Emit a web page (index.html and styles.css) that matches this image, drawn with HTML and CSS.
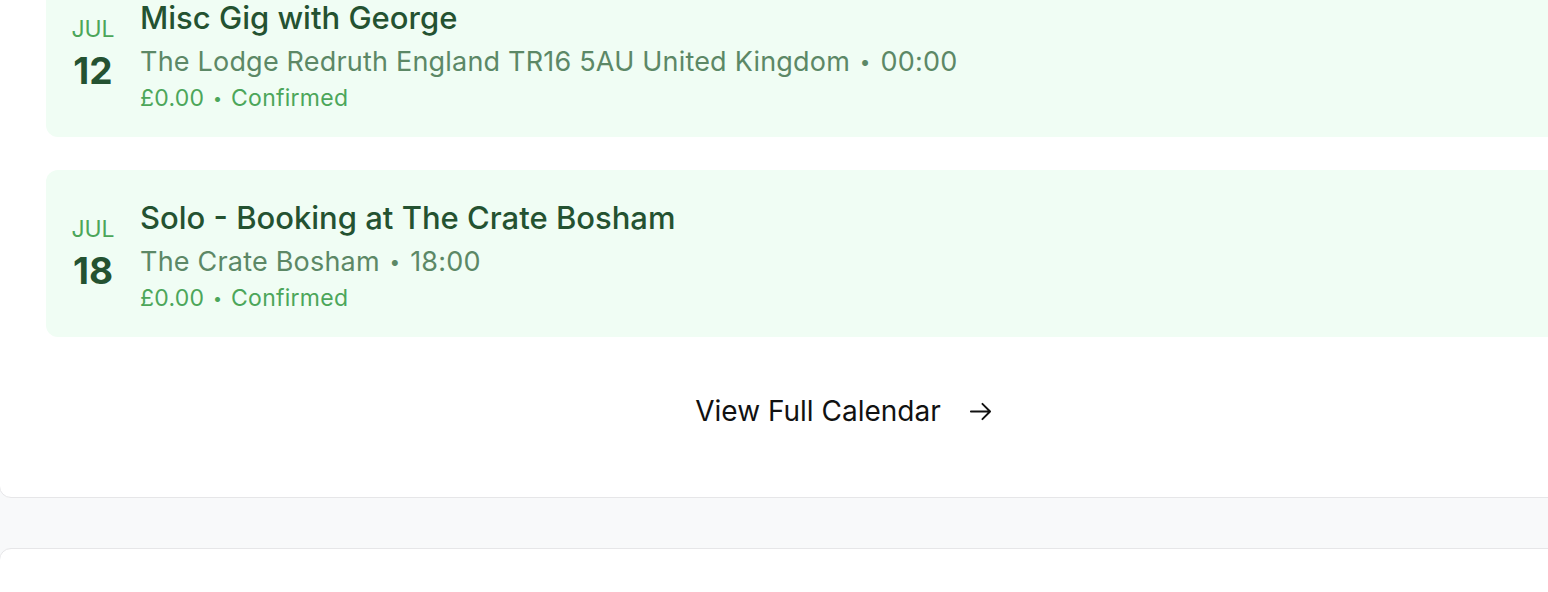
FILE: index.html
```html
<!DOCTYPE html>
<html lang="en">
<head>
<meta charset="utf-8">
<title>Upcoming Gigs</title>
<link rel="stylesheet" href="styles.css">
</head>
<body>
<div class="page">
  <section class="panel">
    <div class="events">
      <article class="event">
        <div class="date">
          <div class="month">JUL</div>
          <div class="day">12</div>
        </div>
        <div class="info">
          <h3 class="title">Misc Gig with George</h3>
          <p class="sub">The Lodge Redruth England TR16 5AU United Kingdom <span class="dot">•</span> 00:00</p>
          <p class="meta">£0.00 <span class="dot">•</span> Confirmed</p>
        </div>
      </article>
      <article class="event">
        <div class="date">
          <div class="month">JUL</div>
          <div class="day">18</div>
        </div>
        <div class="info">
          <h3 class="title">Solo - Booking at The Crate Bosham</h3>
          <p class="sub">The Crate Bosham <span class="dot">•</span> 18:00</p>
          <p class="meta">£0.00 <span class="dot">•</span> Confirmed</p>
        </div>
      </article>
    </div>
    <div class="footer">
      <a class="view-all" href="#">
        <span>View Full Calendar</span>
        <svg class="arrow" viewBox="0 0 24 24" width="24" height="24" fill="none" stroke="currentColor" stroke-width="2" stroke-linecap="round" stroke-linejoin="round"><path d="M2 12h20M14 4l8 8-8 8"/></svg>
      </a>
    </div>
  </section>
  <section class="panel next"></section>
</div>
</body>
</html>
```

FILE: styles.css
```css
html, body {
  margin: 0;
  padding: 0;
}
body {
  background: #f8f9fa;
  overflow: hidden;
  font-family: Inter, "Liberation Sans", Arial, sans-serif;
}
.page {
  width: 1689px;
  margin-left: -1px;
  display: flex;
  flex-direction: column;
  gap: 50px;
}
.panel {
  background: #ffffff;
  border: 1px solid #e6e6e8;
  border-radius: 12px;
  padding: 0 46px 66px;
  margin-top: -31px;
  box-sizing: border-box;
}
.panel.next {
  margin-top: 0;
  height: 200px;
  padding: 0;
}
.events {
  display: flex;
  flex-direction: column;
  gap: 33px;
}
.event {
  background: #f0fdf4;
  border-radius: 12px;
  display: flex;
  align-items: flex-start;
  gap: 24px;
  padding: 28px 24px 23px;
  height: 167px;
  box-sizing: border-box;
}
.date {
  width: 46px;
  text-align: center;
  margin-top: 18px;
  flex-shrink: 0;
}
.month {
  font-size: 23px;
  line-height: 26px;
  color: #4ca65a;
}
.day {
  font-size: 37px;
  line-height: 44px;
  font-weight: 700;
  color: #245231;
  margin-top: 7px;
}
.info {
  display: flex;
  flex-direction: column;
}
.title {
  margin: 0;
  font-size: 31px;
  line-height: 40px;
  font-weight: 500;
  color: #245231;
}
.sub {
  margin: 4px 0 0;
  font-size: 27px;
  line-height: 40px;
  letter-spacing: 0.2px;
  color: #5c8866;
}
.meta {
  margin: 0;
  font-size: 23px;
  line-height: 32px;
  letter-spacing: 0.25px;
  color: #4ca65a;
}
.dot {
  font-size: 0.7em;
  vertical-align: 0.15em;
  margin: 0 2px;
}
.footer {
  display: flex;
  justify-content: center;
  margin-top: 54px;
}
.view-all {
  display: flex;
  align-items: center;
  gap: 28px;
  font-size: 28px;
  line-height: 40px;
  color: #111111;
  text-decoration: none;
}
.arrow {
  width: 23px;
  height: 23px;
}
```
